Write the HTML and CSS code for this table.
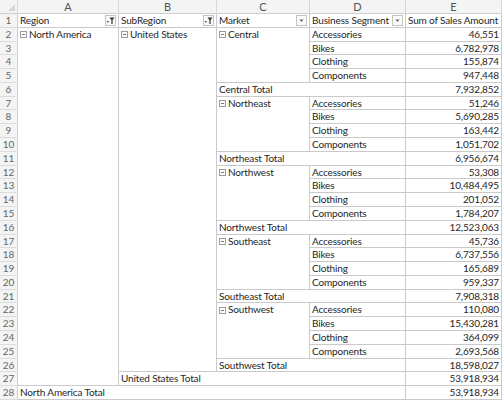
FILE: index.html
```html
<!DOCTYPE html>
<html>
<head>
<meta charset="utf-8">
<link rel="stylesheet" href="styles.css">
</head>
<body>
<div class="sheet">
  <div class="hd corner"><span class="tri"></span></div>
  <div class="hd">A</div><div class="hd">B</div><div class="hd">C</div><div class="hd">D</div><div class="hd">E</div>

  <div class="rn">1</div>
  <div class="c ph"><span>Region</span><span class="btn"><svg width="9" height="9" viewBox="0 0 9 9"><path d="M0.5 5 L3 5 L1.75 7 Z" fill="#555"/><path d="M3.5 1.5 H8.5 L6.6 4 V8 H5.4 V4 Z" fill="#333"/></svg></span></div>
  <div class="c ph"><span>SubRegion</span><span class="btn"><svg width="9" height="9" viewBox="0 0 9 9"><path d="M0.5 5 L3 5 L1.75 7 Z" fill="#555"/><path d="M3.5 1.5 H8.5 L6.6 4 V8 H5.4 V4 Z" fill="#333"/></svg></span></div>
  <div class="c ph"><span>Market</span><span class="btn"><svg width="9" height="9" viewBox="0 0 9 9"><path d="M2.5 3.5 H6.5 L4.5 6 Z" fill="#666"/></svg></span></div>
  <div class="c ph"><span>Business Segment</span><span class="btn"><svg width="9" height="9" viewBox="0 0 9 9"><path d="M2.5 3.5 H6.5 L4.5 6 Z" fill="#666"/></svg></span></div>
  <div class="c ph"><span>Sum of Sales Amount</span></div>

  <div class="rn">2</div>
  <div class="c r26"><span class="tog"></span>North America</div>
  <div class="c r25"><span class="tog"></span>United States</div>
  <div class="c r4"><span class="tog"></span>Central</div>
  <div class="c">Accessories</div><div class="c num">46,551</div>
  <div class="rn">3</div><div class="c">Bikes</div><div class="c num">6,782,978</div>
  <div class="rn">4</div><div class="c">Clothing</div><div class="c num">155,874</div>
  <div class="rn">5</div><div class="c">Components</div><div class="c num">947,448</div>
  <div class="rn">6</div><div class="c s2">Central Total</div><div class="c num">7,932,852</div>

  <div class="rn">7</div>
  <div class="c r4"><span class="tog"></span>Northeast</div>
  <div class="c">Accessories</div><div class="c num">51,246</div>
  <div class="rn">8</div><div class="c">Bikes</div><div class="c num">5,690,285</div>
  <div class="rn">9</div><div class="c">Clothing</div><div class="c num">163,442</div>
  <div class="rn">10</div><div class="c">Components</div><div class="c num">1,051,702</div>
  <div class="rn">11</div><div class="c s2">Northeast Total</div><div class="c num">6,956,674</div>

  <div class="rn">12</div>
  <div class="c r4"><span class="tog"></span>Northwest</div>
  <div class="c">Accessories</div><div class="c num">53,308</div>
  <div class="rn">13</div><div class="c">Bikes</div><div class="c num">10,484,495</div>
  <div class="rn">14</div><div class="c">Clothing</div><div class="c num">201,052</div>
  <div class="rn">15</div><div class="c">Components</div><div class="c num">1,784,207</div>
  <div class="rn">16</div><div class="c s2">Northwest Total</div><div class="c num">12,523,063</div>

  <div class="rn">17</div>
  <div class="c r4"><span class="tog"></span>Southeast</div>
  <div class="c">Accessories</div><div class="c num">45,736</div>
  <div class="rn">18</div><div class="c">Bikes</div><div class="c num">6,737,556</div>
  <div class="rn">19</div><div class="c">Clothing</div><div class="c num">165,689</div>
  <div class="rn">20</div><div class="c">Components</div><div class="c num">959,337</div>
  <div class="rn">21</div><div class="c s2">Southeast Total</div><div class="c num">7,908,318</div>

  <div class="rn">22</div>
  <div class="c r4"><span class="tog"></span>Southwest</div>
  <div class="c">Accessories</div><div class="c num">110,080</div>
  <div class="rn">23</div><div class="c">Bikes</div><div class="c num">15,430,281</div>
  <div class="rn">24</div><div class="c">Clothing</div><div class="c num">364,099</div>
  <div class="rn">25</div><div class="c">Components</div><div class="c num">2,693,568</div>
  <div class="rn">26</div><div class="c s2">Southwest Total</div><div class="c num">18,598,027</div>

  <div class="rn">27</div><div class="c s3">United States Total</div><div class="c num">53,918,934</div>
  <div class="rn">28</div><div class="c s4">North America Total</div><div class="c num">53,918,934</div>
</div>
</body>
</html>
```

FILE: styles.css
```css
html, body {
  margin: 0;
  padding: 0;
  background: #fff;
}

.sheet {
  display: grid;
  grid-template-columns: 18px 101px 98px 93px 96px 96px;
  grid-template-rows: 14px repeat(28, 13.785px);
  width: 502px;
  height: 400px;
  overflow: hidden;
  font-family: Lato, "Liberation Sans", sans-serif;
}

.hd {
  box-sizing: border-box;
  background: #f4f4f4;
  border-right: 1px solid #d8d8d8;
  border-bottom: 1px solid #cfcfcf;
  color: #555;
  font-size: 11px;
  line-height: 13px;
  text-align: center;
}

.corner {
  position: relative;
}

.corner .tri {
  position: absolute;
  right: 2px;
  bottom: 2px;
  width: 0;
  height: 0;
  border-left: 7px solid transparent;
  border-bottom: 7px solid #d6d6d6;
}

.rn {
  box-sizing: border-box;
  background: #f4f4f4;
  border-right: 1px solid #cfcfcf;
  border-bottom: 1px solid #dcdcdc;
  color: #666;
  font-size: 10px;
  line-height: 13px;
  text-align: center;
}

.c {
  box-sizing: border-box;
  border-right: 1px solid #cacaca;
  border-bottom: 1px solid #cacaca;
  color: #262626;
  font-size: 10px;
  letter-spacing: -0.15px;
  line-height: 12.8px;
  padding: 0 2px;
  white-space: nowrap;
  overflow: hidden;
}

.num {
  text-align: right;
}

.ph {
  display: flex;
  justify-content: space-between;
  align-items: center;
}

.btn {
  box-sizing: border-box;
  display: inline-flex;
  align-items: center;
  justify-content: center;
  width: 11px;
  height: 11px;
  border: 1px solid #c4c4c4;
  background: #fafafa;
  flex: none;
}

.btn svg {
  display: block;
}

.tog {
  box-sizing: border-box;
  display: inline-block;
  position: relative;
  width: 7px;
  height: 7px;
  border: 1px solid #9c9c9c;
  margin-right: 2px;
  vertical-align: -0.5px;
}

.tog::after {
  content: "";
  position: absolute;
  left: 1px;
  right: 1px;
  top: 2px;
  height: 1px;
  background: #777;
}

.r26 { grid-row: span 26; }
.r25 { grid-row: span 25; }
.r4 { grid-row: span 4; }
.s2 { grid-column: span 2; }
.s3 { grid-column: span 3; }
.s4 { grid-column: span 4; }
```
